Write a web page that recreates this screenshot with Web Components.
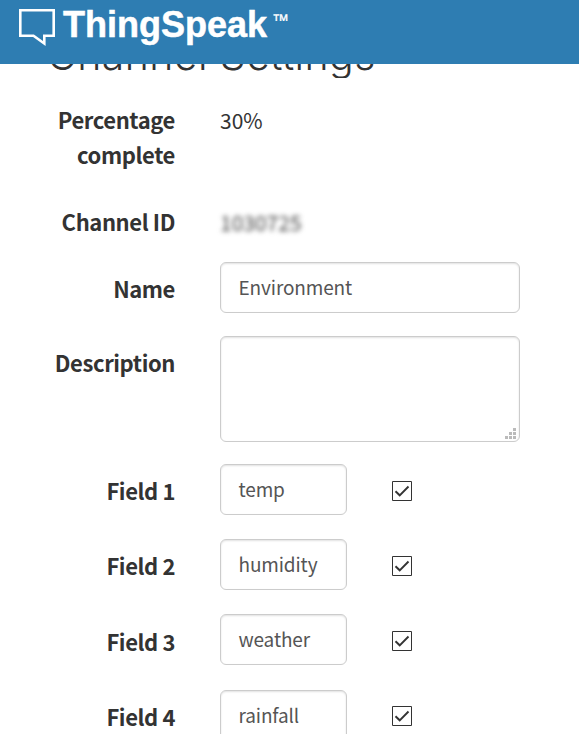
<!DOCTYPE html>
<html lang="en">
<head>
<meta charset="utf-8">
<title>Channel Settings</title>
<style>
html,body{margin:0;height:734px;overflow:hidden;background:#fff}
body{font-family:"Noto Sans CJK SC","Open Sans",sans-serif;color:#333}
</style>
</head>
<body>
<channel-page>
  <site-header slot="header">ThingSpeak</site-header>
  <page-title slot="title">Channel Settings</page-title>
  <form-row style="--h:102px;--pad:1px"><span slot="label">Percentage<br>complete</span><static-value style="--top:2px">30%</static-value></form-row>
  <form-row style="--h:59px;--pad:1px"><span slot="label">Channel ID</span><static-value blurred style="--top:2px">1030725</static-value></form-row>
  <form-row style="--h:74px;--pad:9px"><span slot="label">Name</span><text-box>Environment</text-box></form-row>
  <form-row style="--h:128px;--pad:9px"><span slot="label">Description</span><text-area></text-area></form-row>
  <form-row style="--h:75px;--pad:9px"><span slot="label">Field 1</span><text-box small>temp</text-box><check-box></check-box></form-row>
  <form-row style="--h:75px;--pad:9px"><span slot="label">Field 2</span><text-box small>humidity</text-box><check-box></check-box></form-row>
  <form-row style="--h:76px;--pad:10px"><span slot="label">Field 3</span><text-box small>weather</text-box><check-box></check-box></form-row>
  <form-row style="--h:75px;--pad:9px"><span slot="label">Field 4</span><text-box small>rainfall</text-box><check-box style="--box-top:16px"></check-box></form-row>
</channel-page>
<script>
const define = (name, html) => customElements.define(name, class extends HTMLElement {
  constructor() {
    super();
    this.attachShadow({mode: 'open'}).innerHTML = html;
  }
});

define('channel-page', `<style>
:host{display:flex;flex-direction:column;height:734px;overflow:hidden}
main{display:flex;flex-direction:column}
</style><slot name="header"></slot><slot name="title"></slot><main><slot></slot></main>`);

define('site-header', `<style>
:host{display:flex;align-items:flex-start;flex:none;box-sizing:border-box;height:64px;padding-left:18px;background:#2e7db2;color:#fff;font:bold 36px/42px "Liberation Sans",Arial,sans-serif}
svg{flex:none;width:38px;height:40px;margin:8px 7px 0 0}
.name{margin-top:4px;-webkit-text-stroke:.5px #fff}
sup{font:17px/18px "Liberation Sans",Arial,sans-serif;margin:12px 0 0 5px;-webkit-text-stroke:.3px #fff}
</style><svg viewBox="0 0 38 40" fill="none" stroke="#fff" stroke-width="2.6"><path d="M2.3 2.3H35.7V27.7H26.3V35.5L15.5 27.7H2.3Z"/></svg><span class="name"><slot></slot></span><sup>™</sup>`);

define('page-title', `<style>
:host{display:flex;align-items:flex-end;flex:none;height:14px;margin-bottom:23px;padding-left:47px;overflow:hidden;color:#333;font:300 41px/46px Inter,sans-serif;letter-spacing:.4px;white-space:nowrap}
</style><span><slot></slot></span>`);

define('form-row', `<style>
:host{display:grid;grid-template-columns:175px 127px auto;column-gap:45px;flex:none;height:var(--h);align-items:start}
.label{padding-top:var(--pad);text-align:right;font-weight:700;font-size:22px;letter-spacing:-.4px;line-height:35px;height:35px}
</style><div class="label"><slot name="label"></slot></div><slot></slot>`);

define('static-value', `<style>
:host{display:block;padding-top:var(--top);font-size:21px;line-height:35px}
:host([blurred]){filter:blur(2.6px);color:#444}
</style><slot></slot>`);

define('text-box', `<style>
:host{display:block;box-sizing:border-box;width:300px;height:51px;padding:0 17.5px;border:1px solid #ccc;border-radius:6px;box-shadow:inset 0 1px 2px rgba(0,0,0,.12);color:#555;font-size:19px;letter-spacing:-.13px;line-height:48px;white-space:nowrap}
:host([small]){width:127px}
</style><slot></slot>`);

define('text-area', `<style>
:host{display:flex;align-items:flex-end;justify-content:flex-end;box-sizing:border-box;width:300px;height:106px;padding:2px 3px;border:1px solid #ccc;border-radius:6px;box-shadow:inset 0 1px 2px rgba(0,0,0,.12)}
svg{width:11px;height:11px}
</style><svg viewBox="0 0 11 11" fill="#bbb" shape-rendering="crispEdges"><path d="M8 0h3v3H8zM4 4h3v3H4zM8 4h3v3H8zM0 8h3v3H0zM4 8h3v3H4zM8 8h3v3H8z"/></svg>`);

define('check-box', `<style>
:host{display:block;padding-top:var(--box-top,17px)}
svg{display:block;width:20px;height:20px}
</style><svg viewBox="0 0 20 20" fill="none" stroke="#333"><path d="M.5.5h19v19H.5z"/><path d="M3.5 10.2L7.7 14.3L16.5 5.5" stroke-width="1.9"/></svg>`);
</script>
</body>
</html>
